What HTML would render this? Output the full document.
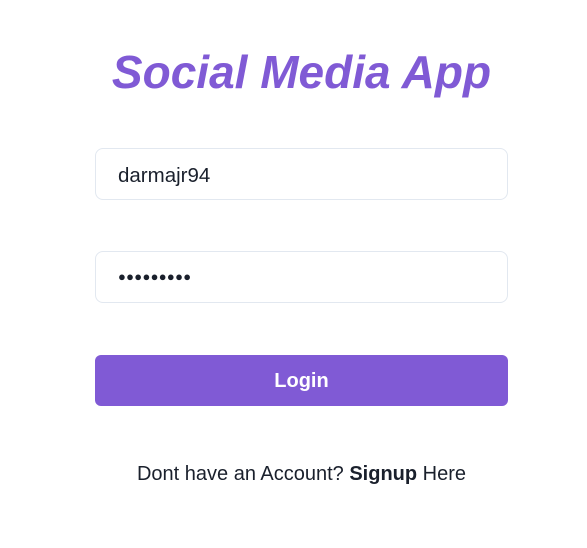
<!DOCTYPE html>
<html><head><meta charset="utf-8"><style>
body{margin:0;background:#fff;width:587px;height:548px;font-family:"Liberation Sans",sans-serif;position:relative;overflow:hidden}
h1{position:absolute;left:0;width:603px;top:45px;margin:0;text-align:center;font-size:46px;font-weight:bold;font-style:italic;color:#805ad5;line-height:54px}
.in{position:absolute;left:95px;width:411px;height:50px;border:1px solid #e2e8f0;border-radius:8px;box-sizing:content-box;font-size:20.5px;color:#1a202c;line-height:54px}
.in span{position:absolute;left:22px}
.btn{position:absolute;left:95px;top:355px;width:413px;height:51px;background:#805ad5;border-radius:6px;color:#fff;font-weight:bold;font-size:20px;text-align:center;line-height:53px}
.ft{position:absolute;left:0;width:603px;top:461px;text-align:center;font-size:20px;color:#1a202c;line-height:26px}
</style></head><body>
<h1>Social Media App</h1>
<div class="in" style="top:148px"><span>darmajr94</span></div>
<div class="in" style="top:251px"><span style="font-size:13px;letter-spacing:0.3px;line-height:50px">●●●●●●●●●</span></div>
<div class="btn">Login</div>
<div class="ft">Dont have an Account? <b>Signup</b> Here</div>
</body></html>
